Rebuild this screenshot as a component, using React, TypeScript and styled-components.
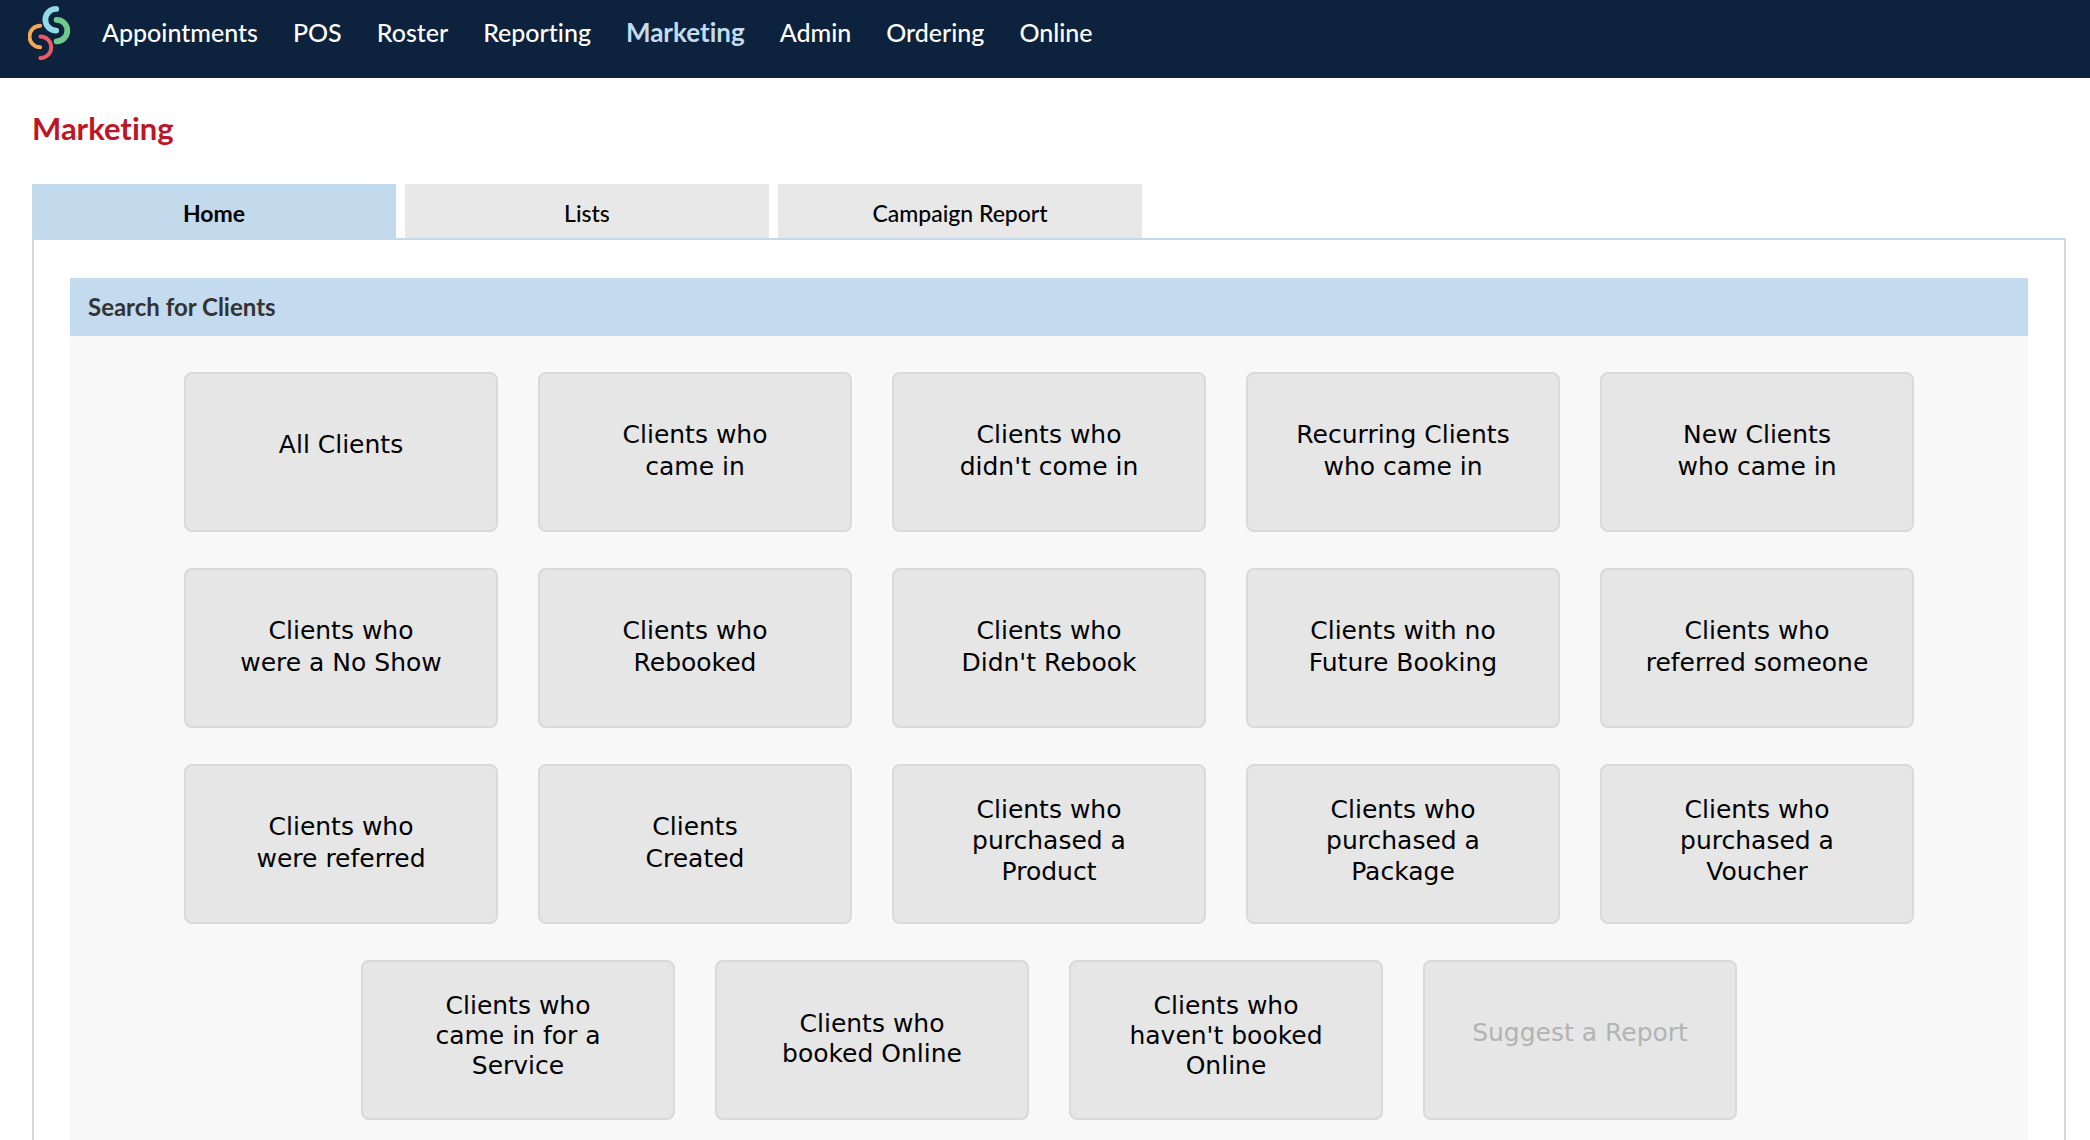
import React from "react";
import styled, { createGlobalStyle } from "styled-components";

const GlobalStyle = createGlobalStyle`
  *, *::before, *::after { box-sizing: border-box; }
  body {
    margin: 0;
    background: #fff;
    color: #000;
    font-family: Lato, "Open Sans", sans-serif;
    font-variant-ligatures: none;
  }
`;

const Page = styled.div`
  display: flex;
  flex-direction: column;
  min-height: 100vh;
`;

const TopBar = styled.header`
  display: flex;
  align-items: flex-start;
  gap: 32px;
  height: 78px;
  padding: 6px 28px 0;
  background: #0c223d;
`;

const LogoLink = styled.a`
  display: block;
  width: 42px;
  height: 54px;
`;

const Nav = styled.nav`
  display: flex;
  flex-wrap: wrap;
  gap: 35px;
  padding-top: 10px;
`;

const NavLink = styled.a<{ $active?: boolean }>`
  color: ${(p) => (p.$active ? "#c3dbee" : "#fff")};
  font-size: ${(p) => (p.$active ? 26 : 25)}px;
  line-height: 32px;
  font-weight: ${(p) => (p.$active ? 700 : 500)};
  text-decoration: none;
`;

const Main = styled.main`
  display: flex;
  flex: 1;
  flex-direction: column;
  padding: 30px 24px 0 32px;
`;

const Title = styled.h1`
  margin: 0 0 36px;
  color: #bd1525;
  font-size: 31px;
  line-height: 40px;
  font-weight: 700;
`;

const Tabs = styled.div`
  display: flex;
  gap: 9px;
`;

const Tab = styled.button<{ $active?: boolean }>`
  width: 364px;
  height: 54px;
  padding: 4px 0 0;
  border: 0;
  background: ${(p) => (p.$active ? "#c3daed" : "#e8e8e8")};
  color: #000;
  font-family: inherit;
  font-size: 23px;
  line-height: 30px;
  font-weight: ${(p) => (p.$active ? 700 : 500)};
  font-variant-ligatures: none;
  cursor: pointer;
`;

const TabPanel = styled.div`
  display: flex;
  flex: 1;
  flex-direction: column;
  padding: 38px 36px 0;
  border: solid #d9d9d9;
  border-width: 0 2px;
  border-top: 2px solid #c3daed;
`;

const Section = styled.section`
  display: flex;
  flex: 1;
  flex-direction: column;
  background: #f8f8f8;
`;

const SectionTitle = styled.h2`
  margin: 0;
  padding: 14px 18px;
  background: #c4daee;
  color: #333;
  font-size: 24px;
  line-height: 30px;
  font-weight: 700;
`;

const Reports = styled.div`
  display: flex;
  flex-direction: column;
  gap: 36px;
  padding: 36px 0 20px;
`;

const ReportRow = styled.div`
  display: flex;
  justify-content: center;
  gap: 40px;
`;

const bottomSpace: Record<number, number> = { 1: 14, 2: 2, 3: 8 };

const ReportButton = styled.button<{ $lines: number; $leading: number }>`
  width: 314px;
  height: 160px;
  padding: 0 20px ${(p) => bottomSpace[p.$lines]}px;
  border: 2px solid #d9d9d9;
  border-radius: 8px;
  background: #e6e6e6;
  color: #000;
  font-family: Verdana, "DejaVu Sans", sans-serif;
  font-size: 25px;
  line-height: ${(p) => p.$leading}px;
  text-align: center;
  white-space: pre-line;
  cursor: pointer;

  &:disabled {
    color: #b3b3b3;
    cursor: default;
  }
`;

const navItems = [
  "Appointments",
  "POS",
  "Roster",
  "Reporting",
  "Marketing",
  "Admin",
  "Ordering",
  "Online",
];

const tabs = ["Home", "Lists", "Campaign Report"];

const reportRows: string[][] = [
  [
    "All Clients",
    "Clients who\ncame in",
    "Clients who\ndidn't come in",
    "Recurring Clients\nwho came in",
    "New Clients\nwho came in",
  ],
  [
    "Clients who\nwere a No Show",
    "Clients who\nRebooked",
    "Clients who\nDidn't Rebook",
    "Clients with no\nFuture Booking",
    "Clients who\nreferred someone",
  ],
  [
    "Clients who\nwere referred",
    "Clients\nCreated",
    "Clients who\npurchased a\nProduct",
    "Clients who\npurchased a\nPackage",
    "Clients who\npurchased a\nVoucher",
  ],
  [
    "Clients who\ncame in for a\nService",
    "Clients who\nbooked Online",
    "Clients who\nhaven't booked\nOnline",
    "Suggest a Report",
  ],
];

// The shorter last row is set tighter; three-line labels elsewhere lose a pixel per line.
function leadingFor(rowLength: number, lines: number) {
  if (rowLength < 5) return 30;
  return lines === 3 ? 31 : 32;
}

function Logo() {
  return (
    <svg width="42" height="54" viewBox="0 0 42 54" fill="none" strokeLinecap="round" aria-hidden="true">
      <path d="M28.6 13.8a10.7 10.7 0 0 1 0 21.5" stroke="#72c98c" strokeWidth="5.8" />
      <path d="M28.2 2.9a10.8 10.8 0 0 0 0 21.7" stroke="#92dae6" strokeWidth="5.8" />
      <path d="M12.2 19.8a10.6 10.6 0 0 0 0 21.4" stroke="#f9a852" strokeWidth="3.9" />
      <path d="M12.4 30.5a10.8 10.8 0 0 1 0 21.6" stroke="#ea5b67" strokeWidth="4" />
    </svg>
  );
}

export default function App() {
  return (
    <Page>
      <GlobalStyle />
      <TopBar>
        <LogoLink href="#" aria-label="Dashboard">
          <Logo />
        </LogoLink>
        <Nav>
          {navItems.map((item) => (
            <NavLink key={item} href="#" $active={item === "Marketing"}>
              {item}
            </NavLink>
          ))}
        </Nav>
      </TopBar>
      <Main>
        <Title>Marketing</Title>
        <Tabs role="tablist">
          {tabs.map((tab) => (
            <Tab key={tab} type="button" role="tab" aria-selected={tab === "Home"} $active={tab === "Home"}>
              {tab}
            </Tab>
          ))}
        </Tabs>
        <TabPanel role="tabpanel">
          <Section>
            <SectionTitle>Search for Clients</SectionTitle>
            <Reports>
              {reportRows.map((row, index) => (
                <ReportRow key={index}>
                  {row.map((label) => {
                    const lines = label.split("\n").length;
                    return (
                      <ReportButton
                        key={label}
                        type="button"
                        disabled={label === "Suggest a Report"}
                        $lines={lines}
                        $leading={leadingFor(row.length, lines)}
                      >
                        {label}
                      </ReportButton>
                    );
                  })}
                </ReportRow>
              ))}
            </Reports>
          </Section>
        </TabPanel>
      </Main>
    </Page>
  );
}
